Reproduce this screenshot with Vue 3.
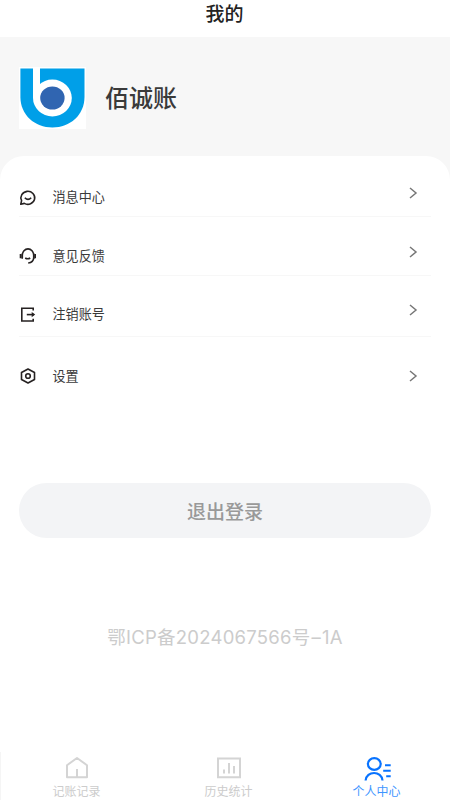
<script setup>
const rows = [
  { id: 'message', label: '消息中心' },
  { id: 'feedback', label: '意见反馈' },
  { id: 'cancel', label: '注销账号' },
  { id: 'settings', label: '设置' },
]
</script>

<template>
  <div class="page">
    <header class="title">我的</header>
    <section class="profile">
      <svg class="logo" width="67" height="62" viewBox="0 0 67 62">
        <rect width="67" height="62" fill="#fff" />
        <path d="M1.4 1.5H65.5V30C65.5 48 51 60.5 33.4 60.5S1.4 48 1.4 30Z" fill="#009fe8" />
        <path d="M14 0H21V31H14Z" fill="#fff" />
        <ellipse cx="33.4" cy="31" rx="19.4" ry="18.4" fill="#fff" />
        <ellipse cx="33.4" cy="31" rx="12.2" ry="11.5" fill="#3065b1" />
      </svg>
      <h1 class="name">佰诚账</h1>
    </section>
    <main class="sheet">
      <ul class="menu">
        <li v-for="row in rows" :key="row.id" class="row" :class="row.id">
          <svg class="icon" width="18" height="18" viewBox="0 0 18 18" fill="none" stroke="#262222" stroke-width="1.6">
            <template v-if="row.id === 'message'">
              <path d="M1.8 16.2L2.6 12.6A6.9 6.5 0 1 1 5.3 15.4Z" stroke-linejoin="round" />
              <path d="M5.8 9.8Q9 13 12.2 9.8" />
            </template>
            <template v-else-if="row.id === 'feedback'">
              <path d="M3.3 11V8A5.6 6 0 0 1 14.7 8V10.8Q14.5 15.5 9.2 16" />
              <path d="M1.5 7V11.2M16.2 7V11.2" stroke-width="1.6" />
              <path d="M3.2 6.5V11.8M14.8 6.5V11.8" />
              <path d="M6.2 11Q8.7 12.6 11.2 11" />
            </template>
            <template v-else-if="row.id === 'cancel'">
              <path d="M14.2 5.5V3.2H2.8V16H14.2V13.7" />
              <path d="M7.8 9.6H15" />
              <path d="M12.7 7L16.2 9.6L12.7 12.2Z" fill="#262222" stroke="none" />
            </template>
            <template v-else>
              <path d="M9 2L15.5 5.5V12.5L9 16L2.5 12.5V5.5Z" stroke-linejoin="round" />
              <circle cx="9" cy="9" r="2.3" />
            </template>
          </svg>
          <span class="label">{{ row.label }}</span>
          <svg class="arrow" width="10" height="12" viewBox="0 0 10 12" fill="none" stroke="#777" stroke-width="1.5">
            <path d="M2 1L8 6L2 11" />
          </svg>
        </li>
      </ul>
      <button class="logout">退出登录</button>
      <p class="record">鄂ICP备2024067566号<span class="dash">–</span>1A</p>
    </main>
    <nav class="tabs">
      <a class="tab">
        <svg width="28" height="26" viewBox="0 0 28 26" fill="none" stroke="#d4d4d4" stroke-width="2">
          <path d="M4 22.2V10.2L14 3L24 10.2V22.2Z" stroke-linejoin="round" />
          <path d="M14 14V22" />
        </svg>
        <span>记账记录</span>
      </a>
      <a class="tab">
        <svg width="28" height="26" viewBox="0 0 28 26" fill="none" stroke="#d4d4d4" stroke-width="2">
          <path d="M3 3.5H25V22.2H3Z" />
          <path d="M9 14.5V18.5M14 8V18.5M19 11V18.5" />
        </svg>
        <span>历史统计</span>
      </a>
      <a class="tab active">
        <svg width="28" height="26" viewBox="0 0 28 26" fill="none" stroke="#0873ff" stroke-width="2.2">
          <ellipse cx="11.3" cy="9" rx="6.4" ry="5.8" />
          <path d="M2.6 25.5C3.3 15.5 18.8 15.5 19.5 25.5" />
          <path d="M22 10.2H27.7M20.2 15.7H27.7M23.2 21.3H27.7" stroke-width="2" />
        </svg>
        <span>个人中心</span>
      </a>
    </nav>
  </div>
</template>

<style>
body { margin: 0; background: #fff; }
</style>

<style scoped>
.page {
  box-sizing: border-box;
  width: 450px;
  height: 800px;
  display: flex;
  flex-direction: column;
  overflow: hidden;
  background: #f7f7f7;
  font-family: "Noto Sans CJK SC", sans-serif;
}
.title {
  height: 37px;
  padding-right: 1px;
  line-height: 25px;
  text-align: center;
  background: #fff;
  color: #222;
  font-size: 19px;
  font-weight: 500;
}
.profile {
  display: flex;
  gap: 19px;
  height: 89px;
  padding: 30px 19px 0;
}
.logo { flex: none; }
.name {
  margin: 0;
  font-size: 24px;
  line-height: 59px;
  font-weight: 500;
  color: #3a3a3a;
}
.sheet {
  flex: 1;
  background: #fff;
  border-radius: 24px 24px 0 0;
}
.menu { margin: 0; padding: 0 19px; list-style: none; }
.row {
  box-sizing: border-box;
  display: flex;
  height: 60px;
  border-bottom: 1px solid #f7f7f7;
}
.message { height: 61px; padding-top: 31px; }
.feedback { height: 59px; padding-top: 29px; }
.cancel { height: 61px; padding-top: 28px; }
.settings { padding-top: 29px; border: 0; }
.icon { margin-top: 1px; }
.label {
  flex: 1;
  margin-left: 15.5px;
  font-size: 13.1px;
  line-height: 20px;
  color: #3a3a3a;
}
.arrow { margin: 0 13px 0 0; }
.settings .arrow { margin-top: 4px; }
.logout {
  display: block;
  width: 412px;
  height: 55px;
  margin: 86px auto 0;
  padding: 0;
  border: 0;
  border-radius: 28px;
  background: #f3f4f6;
  color: #999;
  font: 500 19px/56px "Noto Sans CJK SC", sans-serif;
}
.record {
  margin: 85px 0 0;
  text-align: center;
  font-family: Inter, "Noto Sans CJK SC", sans-serif;
  font-size: 18.5px;
  letter-spacing: 0.25px;
  line-height: 28px;
  color: #ccc;
}
.dash { margin: 0 1px; }
.tabs {
  box-sizing: border-box;
  display: grid;
  grid-template-columns: 151px 153px 143px;
  height: 48px;
  background: #fff;
  border-left: 1px solid #f5f5f5;
}
.tab {
  display: flex;
  flex-direction: column;
  align-items: center;
  padding-top: 3px;
  font-size: 12px;
  line-height: 20px;
  color: #ccc;
}
.tab svg { flex: none; }
.active { color: #3f96ff; }
</style>
